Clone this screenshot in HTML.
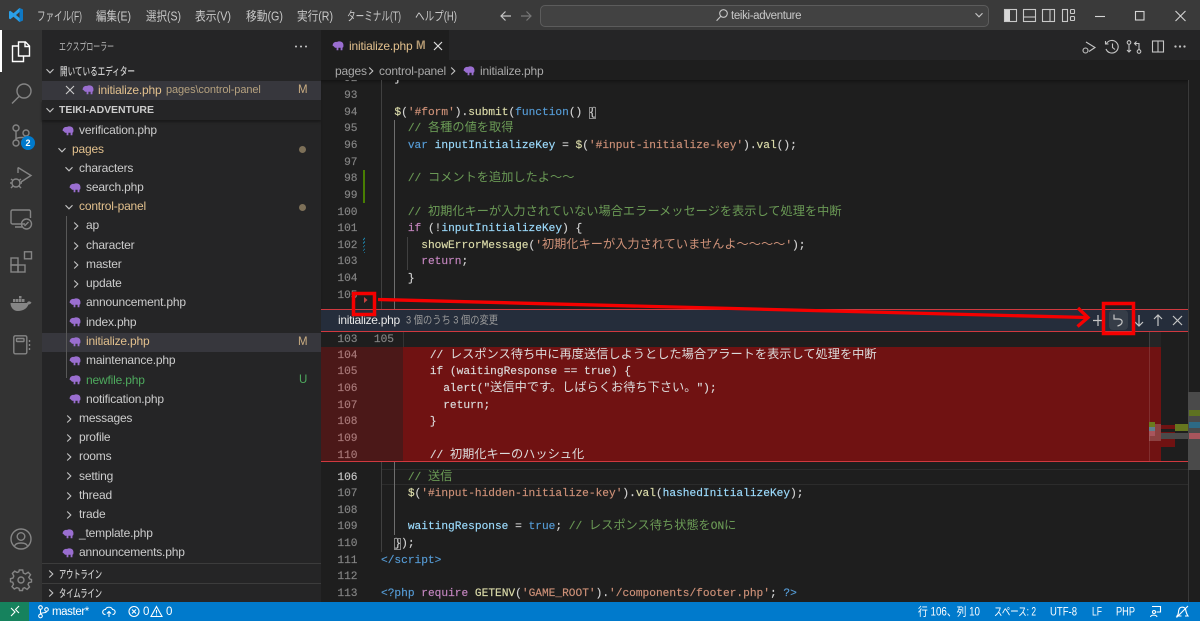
<!DOCTYPE html>
<html lang="ja"><head><meta charset="utf-8"><title>teiki-adventure</title>
<style>
html,body{margin:0;padding:0;width:1200px;height:621px;overflow:hidden;background:#1e1e1e}
body{position:relative;font-family:"Liberation Sans","Noto Sans CJK JP",sans-serif;color:#ccc}
.a{position:absolute}
.s{position:absolute;white-space:nowrap;font-size:12px;line-height:19px;height:19px;letter-spacing:-.18px;color:#ccc}
.m{color:#e2c08d}.u{color:#73c991}
.code{position:absolute;font-family:"Liberation Mono","Noto Sans CJK JP",monospace;font-size:11.18px;line-height:16.65px;white-space:pre;color:#d4d4d4;-webkit-text-stroke:.15px}
.code div{height:16.65px}
.code i{font-family:"Noto Sans CJK JP",sans-serif;font-style:normal;font-size:12.2px;letter-spacing:.02px;line-height:0;-webkit-text-stroke:0}
.nums{position:absolute;font-family:"Liberation Mono",monospace;font-size:11.18px;line-height:16.65px;text-align:right;color:#858585;white-space:pre;-webkit-text-stroke:.15px}
.nums div{height:16.65px}
.c{color:#6a9955}.k{color:#569cd6}.t{color:#ce9178}.v{color:#9cdcfe}.f{color:#dcdcaa}.p{color:#c586c0}
svg{position:absolute;overflow:visible}
.ic{fill:none;stroke:#858585;stroke-width:1.4}
.ic2{fill:none;stroke:#c5c5c5;stroke-width:1.1}
</style></head><body>
<svg width="0" height="0" style="position:absolute"><defs>
<symbol id="e" viewBox="0 0 12 10"><path fill="#9a6ed0" d="M.6 4.6C.8 1.8 3 .6 5 1c1-.9 3.8-.9 5.2.3 1.2 1 1.4 2.6 1.2 4.2-.1.8-.5 1.1-.9 1.1l-.1 2.6H8.6V6.800H6.400V9.200H4.600V6.800C3 7 2.100 6 1.800 5.200 1.400 5.400 1 5.200.6 4.600Z"/></symbol>
<symbol id="d" viewBox="0 0 10 10"><path fill="none" stroke="#c5c5c5" stroke-width="1.100" d="M1.500 3.200 5 6.800 8.500 3.200"/></symbol>
<symbol id="r" viewBox="0 0 10 10"><path fill="none" stroke="#c5c5c5" stroke-width="1.100" d="M3.200 1.500 6.800 5 3.200 8.500"/></symbol>
</defs></svg>

<!-- title bar -->
<div class="a" style="left:0;top:0;width:1200px;height:30px;background:#3a3a3a"></div>
<svg style="left:8px;top:7px" width="16" height="16" viewBox="0 0 16 16"><path fill="#2aa0e8" d="M11.500 1 15 2.600V13.400L11.500 15 5.500 9.800 2.300 12.200 1 11.500V4.500L2.300 3.800 5.500 6.200ZM11.500 5 8 8l3.500 3Z"/><path fill="#0f78c4" d="M11.500 1 15 2.600V13.400L11.500 15Z"/></svg>
<svg style="left:0;top:0" width="1200" height="30" font-size="12.500" fill="#c8c8c8" font-family="'Liberation Sans','Noto Sans CJK JP',sans-serif">
<text x="37" y="20.500" textLength="45" lengthAdjust="spacingAndGlyphs">ファイル(F)</text>
<text x="96" y="20.500" textLength="35" lengthAdjust="spacingAndGlyphs">編集(E)</text>
<text x="146" y="20.500" textLength="35" lengthAdjust="spacingAndGlyphs">選択(S)</text>
<text x="195" y="20.500" textLength="36" lengthAdjust="spacingAndGlyphs">表示(V)</text>
<text x="246" y="20.500" textLength="37" lengthAdjust="spacingAndGlyphs">移動(G)</text>
<text x="297" y="20.500" textLength="36" lengthAdjust="spacingAndGlyphs">実行(R)</text>
<text x="347" y="20.500" textLength="54" lengthAdjust="spacingAndGlyphs">ターミナル(T)</text>
<text x="415" y="20.500" textLength="42" lengthAdjust="spacingAndGlyphs">ヘルプ(H)</text>
</svg>
<svg style="left:500px;top:9px" width="40" height="14" fill="none" stroke-width="1.200"><path stroke="#c5c5c5" d="M11 7H1M5.500 2.500 1 7l4.500 4.500"/><path stroke="#777" d="M21 7H31M26.500 2.500 31 7l-4.500 4.500"/></svg>
<div class="a" style="left:540px;top:5px;width:447px;height:20px;background:#424242;border:1px solid #5c5c5c;border-radius:5px"></div>
<svg style="left:716px;top:9px" width="12" height="13" fill="none" stroke="#c5c5c5" stroke-width="1.100"><circle cx="7.500" cy="4.500" r="3.800"/><path d="M4.800 7.200.6 11.800"/></svg>
<div class="a" style="left:731px;top:8px;font-size:11.500px;line-height:16px;color:#c8c8c8;letter-spacing:-.35px">teiki-adventure</div>
<svg style="left:974px;top:10px" width="10" height="10"><use href="#d" width="10" height="10"/></svg>
<svg style="left:1004px;top:9px" width="72" height="13" fill="none" stroke="#c8c8c8" stroke-width="1.100">
<rect x=".5" y=".5" width="12" height="12"/><rect x="1" y="1" width="5" height="11" fill="#d8d8d8" stroke="none"/>
<rect x="19.500" y=".5" width="12" height="12"/><path d="M19.500 8H31.500"/>
<rect x="38.500" y=".5" width="12" height="12"/><path d="M46 .5V12.500"/>
<rect x="58.500" y=".5" width="5" height="12"/><rect x="66.500" y=".5" width="4" height="4" rx=".8"/><rect x="66.500" y="7.500" width="4" height="4" rx=".8"/>
</svg>
<svg style="left:1095px;top:10px" width="92" height="12" fill="none" stroke="#d4d4d4" stroke-width="1.100"><path d="M0 6.500H10"/><rect x="40.500" y="1.500" width="8.500" height="8.500"/><path d="M80.500 1 90.500 11M90.500 1 80.500 11"/></svg>

<!-- activity bar -->
<div class="a" style="left:0;top:30px;width:42px;height:572px;background:#333"></div>
<div class="a" style="left:0;top:30px;width:2px;height:42px;background:#fff"></div>
<svg style="left:11px;top:41px" width="20" height="22" fill="none" stroke="#fff" stroke-width="1.400"><path d="M7.500 1H14.500L18.500 5V15H7.500ZM14 1V5.500H18.500"/><path d="M7.500 5H1.500V20.500H12.500V15"/></svg>
<svg style="left:11px;top:82px" width="22" height="22" class="ic"><circle cx="13" cy="9" r="7" /><path d="M8 14.500 1 21.500" /></svg>
<svg style="left:12px;top:124px" width="20" height="22" class="ic"><circle cx="4" cy="4" r="3"/><circle cx="4" cy="19" r="3"/><circle cx="14" cy="9" r="3"/><path d="M4 7V16M4 15C6 12 14 15 14 12"/></svg>
<div class="a" style="left:21px;top:136px;width:14px;height:14px;border-radius:7px;background:#007acc;color:#fff;font-size:9px;font-weight:bold;line-height:14px;text-align:center">2</div>
<svg style="left:10px;top:166px" width="24" height="24" class="ic"><path d="M8 1.500 21 9.500 11 16"/><path d="M8 1.500V7"/><circle cx="6" cy="17" r="4"/><path d="M1 13 3 14.500M11 13 9 14.500M0 17H2M10 17H12M1 22 3 20M11 22 9 20"/></svg>
<svg style="left:10px;top:209px" width="23" height="22" class="ic"><path d="M15 15H2.500A1.500 1.500 0 0 1 1 13.500V2.500A1.500 1.500 0 0 1 2.500 1H19A1.500 1.500 0 0 1 20.500 2.500V9M5 18H12"/><circle cx="16.500" cy="15" r="5"/><path d="M14.500 17 18.500 13"/></svg>
<svg style="left:10px;top:251px" width="23" height="22" class="ic"><rect x="1" y="7" width="7" height="7"/><rect x="1" y="14" width="7" height="7"/><rect x="8" y="14" width="7" height="7"/><rect x="14.500" y=".8" width="7" height="7"/></svg>
<svg style="left:10px;top:296px" width="22" height="16"><path fill="#858585" d="M.5 7H17C17.500 5.500 18.500 5 20 5.500L21.500 6.500C20.500 8 19.500 8.500 18.500 8.500 17 12.500 13 15 8 15 3 15 .5 11 .5 7Z"/><path fill="#858585" d="M3 3h2.500v3H3zM6 3h2.500v3H6zM9 3h2.500v3H9zM9 0h2.500v2.500H9zM12 3h2.500v3H12z"/></svg>
<svg style="left:13px;top:335px" width="18" height="20" class="ic"><rect x=".8" y=".8" width="13" height="18" rx="1.500"/><rect x="3.500" y="3.500" width="7.500" height="3" rx=".5"/><path d="M16.500 5V7M16.500 9V11M16.500 13V15"/></svg>
<svg style="left:10px;top:528px" width="22" height="22" class="ic"><circle cx="11" cy="11" r="10"/><circle cx="11" cy="8.500" r="3.800"/><path d="M4.500 18C6 14 16 14 17.500 18"/></svg>
<svg style="left:10px;top:569px" width="22" height="22" class="ic"><circle cx="11" cy="11" r="3"/><path d="M9.300 1H12.700L13.300 4 15.500 5 18.200 3.300 20.500 5.700 18.800 8.300 19.800 10 21.500 10.500V13L18.800 13.700 18 15.500 19.500 18 17.100 20.400 14.500 18.700 13 19.400 12.500 21.500H9.500L9 19.400 6.900 18.600 4.300 20 2 17.600 3.500 15.200 2.700 13.200 .5 12.700V9.700L3 9 3.800 7 2.400 4.400 4.700 2.100 7.100 3.500 8.800 2.800Z"/></svg>

<!-- sidebar -->
<div class="a" style="left:42px;top:30px;width:279px;height:572px;background:#252526"></div>
<svg style="left:0;top:0" width="320" height="602" font-family="'Liberation Sans','Noto Sans CJK JP',sans-serif" fill="#bbb">
<text x="59" y="50" font-size="10.500" textLength="55" lengthAdjust="spacingAndGlyphs">エクスプローラー</text>
<text x="60" y="75" font-size="11" font-weight="500" fill="#ccc" textLength="75" lengthAdjust="spacingAndGlyphs">開いているエディター</text>
<text x="59" y="578" font-size="11" font-weight="500" fill="#ccc" textLength="43" lengthAdjust="spacingAndGlyphs">アウトライン</text>
<text x="59" y="597" font-size="11" font-weight="500" fill="#ccc" textLength="43" lengthAdjust="spacingAndGlyphs">タイムライン</text>
<circle cx="296" cy="46.500" r="1" fill="#ccc"/><circle cx="301" cy="46.500" r="1" fill="#ccc"/><circle cx="306" cy="46.500" r="1" fill="#ccc"/>
</svg>
<div class="a" style="left:42px;top:100px;width:279px;height:20px;background:#252526;box-shadow:0 2px 2px #1a1a1a"></div>
<div class="a" style="left:42px;top:81px;width:279px;height:19px;background:#37373d"></div>
<div class="a" style="left:42px;top:333px;width:279px;height:19px;background:#37373d"></div>
<div class="a" style="left:42px;top:563px;width:279px;height:1px;background:#3c3c3c"></div>
<div class="a" style="left:42px;top:583px;width:279px;height:1px;background:#3c3c3c"></div>
<svg style="left:66px;top:216px" width="1" height="162"><rect width="1" height="162" fill="#585858"/></svg>

<svg style="left:45px;top:66px" width="10" height="10"><use href="#d" width="10" height="10"/></svg>
<svg style="left:65px;top:85px" width="10" height="10" fill="none" stroke="#ccc" stroke-width="1.100"><path d="M1 1 9 9M9 1 1 9"/></svg>
<svg style="left:81.500px;top:85px" width="12" height="10"><use href="#e" width="12" height="10"/></svg>
<div class="s m" style="left:98px;top:81px">initialize.php</div>
<div class="s" style="left:166px;top:81px;font-size:11px;color:#b5a17f;letter-spacing:-.1px">pages\control-panel</div>
<div class="s m" style="left:298px;top:81px;font-size:11.500px;opacity:.85">M</div>
<svg style="left:45px;top:105px" width="10" height="10"><use href="#d" width="10" height="10"/></svg>
<div class="s" style="left:59px;top:101px;font-size:10.500px;font-weight:bold;letter-spacing:-.05px">TEIKI-ADVENTURE</div>

<svg style="left:62px;top:126px" width="12" height="10"><use href="#e" width="12" height="10"/></svg><div class="s" style="left:79px;top:121px">verification.php</div>
<svg style="left:57px;top:145px" width="10" height="10"><use href="#d" width="10" height="10"/></svg><div class="s m" style="left:72px;top:140px">pages</div>
<svg style="left:64px;top:164px" width="10" height="10"><use href="#d" width="10" height="10"/></svg><div class="s" style="left:79px;top:159px">characters</div>
<svg style="left:69px;top:183px" width="12" height="10"><use href="#e" width="12" height="10"/></svg><div class="s" style="left:86px;top:178px">search.php</div>
<svg style="left:64px;top:202px" width="10" height="10"><use href="#d" width="10" height="10"/></svg><div class="s m" style="left:79px;top:197px">control-panel</div>
<svg style="left:71px;top:221px" width="10" height="10"><use href="#r" width="10" height="10"/></svg><div class="s" style="left:86px;top:216px">ap</div>
<svg style="left:71px;top:241px" width="10" height="10"><use href="#r" width="10" height="10"/></svg><div class="s" style="left:86px;top:236px">character</div>
<svg style="left:71px;top:260px" width="10" height="10"><use href="#r" width="10" height="10"/></svg><div class="s" style="left:86px;top:255px">master</div>
<svg style="left:71px;top:279px" width="10" height="10"><use href="#r" width="10" height="10"/></svg><div class="s" style="left:86px;top:274px">update</div>
<svg style="left:69px;top:298px" width="12" height="10"><use href="#e" width="12" height="10"/></svg><div class="s" style="left:86px;top:293px">announcement.php</div>
<svg style="left:69px;top:317px" width="12" height="10"><use href="#e" width="12" height="10"/></svg><div class="s" style="left:86px;top:313px">index.php</div>
<svg style="left:69px;top:337px" width="12" height="10"><use href="#e" width="12" height="10"/></svg><div class="s m" style="left:86px;top:332px">initialize.php</div>
<svg style="left:69px;top:356px" width="12" height="10"><use href="#e" width="12" height="10"/></svg><div class="s" style="left:86px;top:351px">maintenance.php</div>
<svg style="left:69px;top:375px" width="12" height="10"><use href="#e" width="12" height="10"/></svg><div class="s u" style="left:86px;top:371px;color:#4eaa5e">newfile.php</div>
<svg style="left:69px;top:394px" width="12" height="10"><use href="#e" width="12" height="10"/></svg><div class="s" style="left:86px;top:390px">notification.php</div>
<svg style="left:64px;top:414px" width="10" height="10"><use href="#r" width="10" height="10"/></svg><div class="s" style="left:79px;top:409px">messages</div>
<svg style="left:64px;top:433px" width="10" height="10"><use href="#r" width="10" height="10"/></svg><div class="s" style="left:79px;top:428px">profile</div>
<svg style="left:64px;top:452px" width="10" height="10"><use href="#r" width="10" height="10"/></svg><div class="s" style="left:79px;top:447px">rooms</div>
<svg style="left:64px;top:471px" width="10" height="10"><use href="#r" width="10" height="10"/></svg><div class="s" style="left:79px;top:467px">setting</div>
<svg style="left:64px;top:491px" width="10" height="10"><use href="#r" width="10" height="10"/></svg><div class="s" style="left:79px;top:486px">thread</div>
<svg style="left:64px;top:510px" width="10" height="10"><use href="#r" width="10" height="10"/></svg><div class="s" style="left:79px;top:505px">trade</div>
<svg style="left:62px;top:529px" width="12" height="10"><use href="#e" width="12" height="10"/></svg><div class="s" style="left:79px;top:524px">_template.php</div>
<svg style="left:62px;top:548px" width="12" height="10"><use href="#e" width="12" height="10"/></svg><div class="s" style="left:79px;top:543px">announcements.php</div>
<svg style="left:46px;top:569px" width="10" height="10"><use href="#r" width="10" height="10"/></svg>
<svg style="left:46px;top:588px" width="10" height="10"><use href="#r" width="10" height="10"/></svg>
<div class="a" style="left:299px;top:146px;width:7px;height:7px;border-radius:50%;background:#7d7058"></div>
<div class="a" style="left:299px;top:204px;width:7px;height:7px;border-radius:50%;background:#7d7058"></div>
<div class="s m" style="left:298px;top:333px;font-size:11.500px;opacity:.85">M</div>
<div class="s u" style="left:299px;top:371px;font-size:11.500px;color:#4eaa5e">U</div>

<!-- tabs -->
<div class="a" style="left:321px;top:30px;width:879px;height:30px;background:#252526"></div>
<div class="a" style="left:321px;top:30px;width:128px;height:31px;background:#1e1e1e"></div>
<svg style="left:332px;top:41px" width="12" height="10"><use href="#e" width="12" height="10"/></svg>
<div class="s m" style="left:349px;top:37px">initialize.php</div>
<div class="s m" style="left:416px;top:37px;font-size:11.500px;font-weight:bold;opacity:.75">M</div>
<svg style="left:433px;top:41px" width="10" height="10" fill="none" stroke="#ddd" stroke-width="1.200"><path d="M1 1 9 9M9 1 1 9"/></svg>
<svg style="left:1082px;top:40px" width="106" height="14" class="ic2">
<path d="M4 2 13 7.500 7 11.500"/><circle cx="3.500" cy="10.500" r="2.500"/>
<path d="M24.500 3.500A6.300 6.300 0 1 1 24 9M23.500 1V4H26.500M30.500 3.500V7.500L33 9.500"/>
<circle cx="47" cy="2.500" r="1.800"/><circle cx="57" cy="11.500" r="1.800"/><path d="M47 4.500V12M57 9.500V3.500H53M54.500 1.500 52.500 3.500 54.500 5.500M45 10 47 12 49 10"/>
<rect x="70.500" y="1" width="11" height="11"/><path d="M76 1V12"/>
<circle cx="93.500" cy="6.500" r=".6"/><circle cx="98" cy="6.500" r=".6"/><circle cx="102.500" cy="6.500" r=".6"/>
</svg>

<!-- breadcrumb -->
<div class="s" style="left:335px;top:62px;color:#a9a9a9">pages</div>
<svg style="left:366px;top:66px" width="10" height="10"><use href="#r" width="10" height="10"/></svg>
<div class="s" style="left:379px;top:62px;color:#a9a9a9">control-panel</div>
<svg style="left:448px;top:66px" width="10" height="10"><use href="#r" width="10" height="10"/></svg>
<svg style="left:463px;top:66px" width="12" height="10"><use href="#e" width="12" height="10"/></svg>
<div class="s" style="left:480px;top:62px;color:#a9a9a9">initialize.php</div>

<!-- top editor -->
<div class="a" style="left:321px;top:80px;width:867px;height:229px;overflow:hidden;background:#1e1e1e;box-shadow:inset 0 3px 3px -2px #111">
<div class="a" style="left:60px;top:0;width:1px;height:229px;background:#404040"></div>
<div class="a" style="left:73px;top:40px;width:1px;height:189px;background:#6e6e6e"></div>
<div class="a" style="left:86px;top:157px;width:1px;height:33px;background:#404040"></div>
<div class="a" style="left:42px;top:90px;width:2px;height:33px;background:#487e02"></div>
<div class="a" style="left:42px;top:157px;width:2px;height:16px;background:repeating-linear-gradient(-45deg,#1b81a8 0 1px,#1e1e1e 1px 2.500px)"></div>
<div class="nums" style="left:0;top:-8.600px;width:36.500px"><div>92</div><div>93</div><div>94</div><div>95</div><div>96</div><div>97</div><div>98</div><div>99</div><div>100</div><div>101</div><div>102</div><div>103</div><div>104</div><div>105</div></div>
<div class="code" style="left:60px;top:-8.600px"><div>  }</div><div> </div><div>  <span class="f">$</span>(<span class="t">'#form'</span>).<span class="f">submit</span>(<span class="k">function</span>() <span style="outline:1px solid #888;outline-offset:-1px;color:#d7d7d7">{</span></div><div>    <span class="c">// <i>各種の値を取得</i></span></div><div>    <span class="k">var</span> <span class="v">inputInitializeKey</span> = <span class="f">$</span>(<span class="t">'#input-initialize-key'</span>).<span class="f">val</span>();</div><div> </div><div>    <span class="c">// <i>コメントを追加したよ〜〜</i></span></div><div> </div><div>    <span class="c">// <i>初期化キーが入力されていない場合エラーメッセージを表示して処理を中断</i></span></div><div>    <span class="p">if</span> (!<span class="v">inputInitializeKey</span>) {</div><div>      <span class="f">showErrorMessage</span>(<span class="t">'<i>初期化キーが入力されていませんよ〜〜〜〜</i>'</span>);</div><div>      <span class="p">return</span>;</div><div>    }</div></div>
</div>

<!-- diff widget -->
<div class="a" style="left:321px;top:309px;width:867px;height:23px;background:#252d3b;border-top:1px solid #d0393f;border-bottom:1px solid #d0393f;box-sizing:border-box"></div>
<div class="s" style="left:338px;top:311px;color:#e6e6e6;font-size:12px;letter-spacing:-.3px">initialize.php</div>
<svg style="left:0;top:0" width="1200" height="340"><text x="406" y="323.500" font-size="11" fill="#9a9a9a" font-family="'Liberation Sans','Noto Sans CJK JP',sans-serif" textLength="92" lengthAdjust="spacingAndGlyphs">3 個のうち 3 個の変更</text></svg>
<div class="a" style="left:1109px;top:310px;width:19px;height:20px;background:#363d48;border-radius:4px"></div>
<svg style="left:1092px;top:314px" width="92" height="13" fill="none" stroke="#c5c5c5" stroke-width="1.200">
<path d="M6 1V12M1 6.500H11"/>
<path d="M22 .5V5H26.500C31.500 5 31.500 10.500 25.500 12"/>
<path d="M47 1V12M43 8 47 12 51 8"/>
<path d="M66 12V1M62 5 66 1 70 5"/>
<path d="M81 2 90 11M90 2 81 11"/>
</svg>

<div class="a" style="left:321px;top:332px;width:867px;height:129px;background:#1e1e1e;overflow:hidden">
<div class="a" style="left:0;top:15px;width:82px;height:114px;background:#4b1818"></div>
<div class="a" style="left:82px;top:15px;width:758px;height:114px;background:#701212"></div>
<div class="a" style="left:82px;top:0;width:1px;height:15px;background:#333"></div>
<div class="a" style="left:828px;top:0;width:12px;height:15px;background:#252526"></div>
<div class="a" style="left:828px;top:0;width:1px;height:129px;background:rgba(255,255,255,.12)"></div>
<div class="a" style="left:828px;top:92px;width:12px;height:17px;background:rgba(255,255,255,.2)"></div>
<div class="a" style="left:828px;top:90px;width:6px;height:5px;background:#6b7a1e"></div>
<div class="a" style="left:828px;top:95px;width:6px;height:4px;background:#5f7f8f"></div>
<div class="a" style="left:828px;top:99px;width:6px;height:5px;background:#a8555c"></div>
<div class="a" style="left:840px;top:93px;width:14px;height:4px;background:#701212"></div>
<div class="a" style="left:840px;top:100px;width:14px;height:15px;background:#701212"></div>
<div class="a" style="left:854px;top:92px;width:13px;height:7px;background:#66761f"></div>
<div class="a" style="left:840px;top:101px;width:27px;height:6px;background:#4a4a4a"></div>
<div class="nums" style="left:0;top:0;width:36.500px;color:#858585"><div>103</div></div>
<div class="nums" style="left:0;top:0;width:73px;color:#858585"><div>105</div></div>
<div class="nums" style="left:0;top:15.700px;width:36.500px;color:#a97a7a"><div>104</div><div>105</div><div>106</div><div>107</div><div>108</div><div>109</div><div>110</div></div>
<div class="code" style="left:82px;top:15.700px;color:#dcdcdc"><div>    // <i>レスポンス待ち中に再度送信しようとした場合アラートを表示して処理を中断</i></div><div>    if (waitingResponse == true) {</div><div>      alert("<i>送信中です。しばらくお待ち下さい。</i>");</div><div>      return;</div><div>    }</div><div> </div><div>    // <i>初期化キーのハッシュ化</i></div></div>
</div>
<div class="a" style="left:321px;top:461px;width:867px;height:1px;background:#d0393f"></div>

<!-- bottom editor -->
<div class="a" style="left:321px;top:462px;width:867px;height:140px;overflow:hidden;background:#1e1e1e">
<div class="a" style="left:60px;top:7px;width:807px;height:16px;border-top:1px solid #2c2c2c;border-bottom:1px solid #2c2c2c;box-sizing:border-box"></div>
<div class="a" style="left:60px;top:0;width:1px;height:90px;background:#404040"></div>
<div class="a" style="left:73px;top:0;width:1px;height:73px;background:#6e6e6e"></div>
<div class="nums" style="left:0;top:7.500px;width:36.500px"><div style="color:#c6c6c6">106</div><div>107</div><div>108</div><div>109</div><div>110</div><div>111</div><div>112</div><div>113</div></div>
<div class="code" style="left:60px;top:7.500px"><div>    <span class="c">// <i>送信</i></span></div><div>    <span class="f">$</span>(<span class="t">'#input-hidden-initialize-key'</span>).<span class="f">val</span>(<span class="v">hashedInitializeKey</span>);</div><div> </div><div>    <span class="v">waitingResponse</span> = <span class="k">true</span>; <span class="c">// <i>レスポンス待ち状態を</i>ON<i>に</i></span></div><div>  <span style="outline:1px solid #888;outline-offset:-1px;color:#d7d7d7">}</span>);</div><div><span class="k">&lt;/script&gt;</span></div><div> </div><div><span class="k">&lt;?php</span> <span class="p">require</span> <span class="f">GETENV</span>(<span class="t">'GAME_ROOT'</span>).<span class="t">'/components/footer.php'</span>; <span class="k">?&gt;</span></div></div>
</div>

<!-- scrollbar -->
<div class="a" style="left:1188px;top:80px;width:12px;height:522px;background:#1e1e1e;border-left:1px solid #3a3a3a;box-sizing:border-box"></div>
<div class="a" style="left:1188px;top:392px;width:12px;height:78px;background:#4a4a4a"></div>
<div class="a" style="left:1189px;top:410px;width:11px;height:6px;background:#5e7221"></div>
<div class="a" style="left:1189px;top:422px;width:11px;height:6px;background:#2d6a85"></div>
<div class="a" style="left:1189px;top:433px;width:11px;height:6px;background:#a8555c"></div>

<!-- status bar -->
<div class="a" style="left:0;top:602px;width:1200px;height:19px;background:#007acc"></div>
<div class="a" style="left:0;top:602px;width:29px;height:19px;background:#16825d"></div>
<svg style="left:10px;top:606px" width="10" height="11" fill="none" stroke="#fff" stroke-width="1.100"><path d="M1 9 5 5 1 1" transform="translate(0 1)"/><path d="M9 1 5.500 4.500 9 8" transform="translate(0 -1)"/></svg>
<svg style="left:38px;top:605px" width="11" height="14" fill="none" stroke="#fff" stroke-width="1.100"><circle cx="2.500" cy="2.500" r="1.800"/><circle cx="2.500" cy="11" r="1.800"/><circle cx="8.500" cy="4.500" r="1.800"/><path d="M2.500 4.500V9M2.500 9C3.500 7 8.500 8.500 8.500 6.500"/></svg>
<div class="s" style="left:52px;top:603px;color:#fff;font-size:11.500px;letter-spacing:-.4px">master*</div>
<svg style="left:102px;top:606px" width="14" height="12" fill="none" stroke="#fff" stroke-width="1.100"><path d="M3.500 8.500C-.5 8.500 0 3.500 3.500 3.500 4.500 .5 9.500 .5 10.500 3.500 14 3.500 14 8.500 10.500 8.500"/><path d="M7 11V5.500M5 7.500 7 5.500 9 7.500"/></svg>
<svg style="left:128px;top:605px" width="46" height="13" fill="none" stroke="#fff" stroke-width="1.100"><circle cx="6" cy="6.500" r="5"/><path d="M4 4.500 8 8.500M8 4.500 4 8.500"/><path d="M28.500 1.500 34 11.500H23Z"/><path d="M28.500 5V8.500M28.500 9.500V10.500"/></svg>
<div class="s" style="left:143px;top:603px;color:#fff;font-size:11.500px">0</div>
<div class="s" style="left:166px;top:603px;color:#fff;font-size:11.500px">0</div>
<svg style="left:0;top:600px" width="1200" height="21" font-size="11.500" fill="#fff" font-family="'Liberation Sans','Noto Sans CJK JP',sans-serif">
<text x="918" y="15.500" textLength="62" lengthAdjust="spacingAndGlyphs">行 106、列 10</text>
<text x="994" y="15.500" textLength="42" lengthAdjust="spacingAndGlyphs">スペース: 2</text>
<text x="1050" y="15.500" textLength="27" lengthAdjust="spacingAndGlyphs">UTF-8</text>
<text x="1092" y="15.500" textLength="10" lengthAdjust="spacingAndGlyphs">LF</text>
<text x="1116" y="15.500" textLength="19" lengthAdjust="spacingAndGlyphs">PHP</text>
</svg>
<svg style="left:1149px;top:605px" width="40" height="13" fill="none" stroke="#fff" stroke-width="1.100"><path d="M3 1.500H11.500V7H7.500"/><circle cx="5" cy="7" r="1.500"/><path d="M1.500 12C2 9.500 7.500 9.500 8 12"/><path d="M32.500 11H28C30 9 29 7 30 4.500 31 1.500 35 1.500 36.500 4 37 7 37.500 9 39 11H36M27.500 12.500 39 1"/></svg>

<!-- red annotations -->
<svg style="left:0;top:0" width="1200" height="621" fill="none" stroke="#f60000">
<path d="M364 297l3.500 3-3.500 3z" fill="#c9413f" stroke="none"/>
<rect x="353.500" y="293.500" width="21" height="21" stroke-width="3.500"/>
<path d="M378 299.500 1087 317.500" stroke-width="3.300"/>
<path d="M1078 308 1088 317.500 1077.500 326.500" stroke-width="3.300"/>
<rect x="1103.500" y="303.500" width="30" height="30" stroke-width="3.500"/>
</svg>
</body></html>
